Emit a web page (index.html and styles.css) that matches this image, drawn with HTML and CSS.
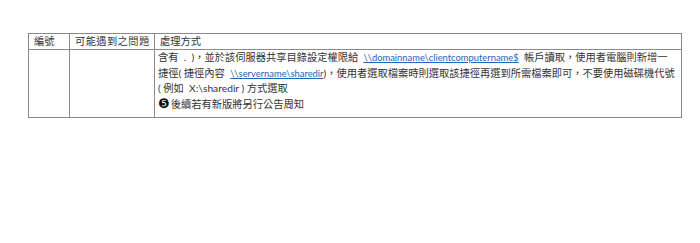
FILE: index.html
```
<!DOCTYPE html>
<html lang="zh-Hant">
<head>
<meta charset="utf-8">
<link rel="stylesheet" href="styles.css">
</head>
<body>
<div class="page">
<table class="faq">
<colgroup><col class="c1"><col class="c2"><col class="c3"></colgroup>
<thead>
<tr><th>編號</th><th class="wide">可能遇到之問題</th><th>處理方式</th></tr>
</thead>
<tbody>
<tr>
<td></td>
<td></td>
<td class="body">
<div class="ln">含有&nbsp;&nbsp;.&nbsp;&nbsp;)，並於該伺服器共享目錄設定權限給&nbsp;&nbsp;<a href="#">\\domainname\clientcomputername$</a>&nbsp;&nbsp;帳戶讀取，使用者電腦則新增一</div>
<div class="ln">捷徑(&nbsp;捷徑內容&nbsp;&nbsp;<a href="#">\\servername\sharedir</a>)，使用者選取檔案時則選取該捷徑再選到所需檔案即可，不要使用磁碟機代號</div>
<div class="ln">(&nbsp;例如&nbsp;&nbsp;X:\sharedir&nbsp;)&nbsp;方式選取</div>
<div class="ln"><span class="num">❺</span>後續若有新版將另行公告周知</div>
</td>
</tr>
</tbody>
</table>
</div>
</body>
</html>
```
FILE: styles.css
```
html, body { margin: 0; padding: 0; background: #fff; }
.page {
  padding: 33px 18px 0 28px;
  font-family: "Lato", "Noto Sans CJK TC", sans-serif;
  font-size: 10.25px;
  color: #333;
}
.faq {
  width: 654px;
  border-collapse: collapse;
  table-layout: fixed;
}
.c1 { width: 41px; }
.c2 { width: 85px; }
.faq th, .faq td {
  border: 1px solid #8a8a8a;
  padding: 0 5px;
  text-align: left;
  vertical-align: top;
  font-weight: normal;
  white-space: nowrap;
}
.faq th { height: 15px; line-height: 15px; }
.faq th.wide { letter-spacing: 0.4px; }
.faq td.body { padding: 0 3px 5px 3px; }
.ln { line-height: 15.5px; white-space: nowrap; }
.faq a { color: #2a63b0; text-decoration: underline; font-size: 9.4px; }
.num { font-family: "DejaVu Sans", sans-serif; font-size: 13px; line-height: 10px; margin-right: 1px; color: #111; }
```
